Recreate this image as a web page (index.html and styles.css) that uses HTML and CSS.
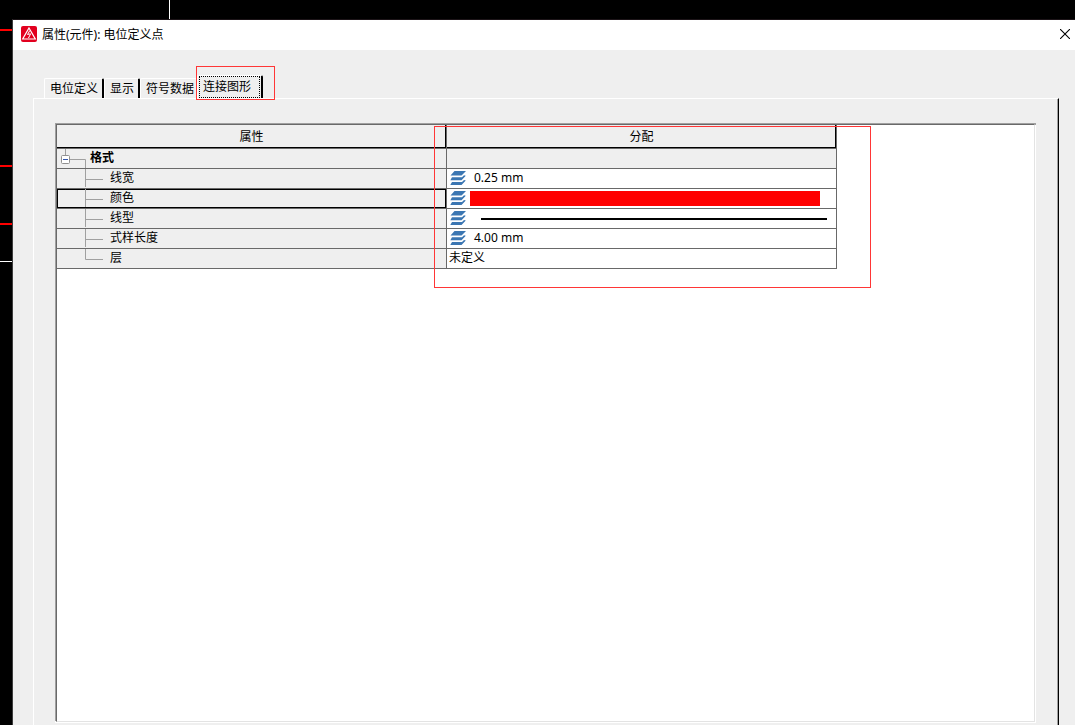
FILE: index.html
```html
<!DOCTYPE html>
<html lang="zh-CN">
<head>
<meta charset="utf-8">
<title>属性(元件): 电位定义点</title>
<link rel="stylesheet" href="styles.css">
</head>
<body>
<svg class="drawing" aria-hidden="true">
  <path d="M0 30H13M0 166H13M0 224H13" stroke="#f00" stroke-width="2"/>
  <path d="M169.500 0V19M0 261.500H13" stroke="#fff"/>
</svg>
<svg class="symbols" aria-hidden="true">
  <symbol id="layers" viewBox="0 0 16 14">
    <path d="M4.500 0H16L11.500 4.500H.5ZM2 6.300H12L14 4.300L15.800 4.800L11.500 9.200H.3ZM2 11H12L14 9L15.800 9.500L11.500 14H.3Z" fill="#3b76b2"/>
  </symbol>
  <symbol id="branch" viewBox="0 0 46 19">
    <path d="M28.500 0V18M28 10.500H46" stroke="#a0a0a0" fill="none"/>
  </symbol>
  <symbol id="branch-end" viewBox="0 0 46 19">
    <path d="M28.500 0V10.500H46" stroke="#a0a0a0" fill="none"/>
  </symbol>
</svg>
<main class="dialog">
  <header class="titlebar">
    <svg class="logo" viewBox="0 0 16 16" aria-hidden="true">
      <rect width="16" height="16" rx="2" fill="#e2001f"/>
      <path d="M8 2L14.300 13H1.700Z" fill="none" stroke="#fff" stroke-width="1.200"/>
      <path d="M8.800 4.500L6.500 8.500L9.600 7.800L7.500 12" fill="none" stroke="#fff" stroke-width="1"/>
    </svg>
    <h1 class="title">属性(元件): 电位定义点</h1>
    <button class="close" type="button" aria-label="关闭">
      <svg viewBox="0 0 10 10" width="10" height="10"><path d="M0 0L10 10M10 0L0 10" stroke="#000" stroke-width="1.100"/></svg>
    </button>
  </header>
  <div class="content">
    <div class="tabs" role="tablist">
      <button class="tab" type="button" role="tab">电位定义</button>
      <button class="tab" type="button" role="tab">显示</button>
      <button class="tab tab-before" type="button" role="tab">符号数据</button>
      <div class="tab-wrap">
        <button class="tab tab-active" type="button" role="tab" aria-selected="true"><span class="focus">连接图形</span></button>
        <span class="mark mark-tab"></span>
      </div>
    </div>
    <section class="panel">
      <div class="list">
        <table class="props">
          <thead>
            <tr><th scope="col">属性</th><th scope="col">分配</th></tr>
          </thead>
          <tbody>
            <tr class="group">
              <td><div class="cell"><svg class="root" width="29" height="19" aria-hidden="true"><path d="M8.500 0V6M13 10.500H28.500V19" stroke="#a0a0a0" fill="none"/><rect x="4.500" y="6.500" width="8" height="8" rx="1" fill="#fff" stroke="#919191"/><path d="M6 10.500H11" stroke="#3355aa"/></svg><b>格式</b></div></td>
              <td></td>
            </tr>
            <tr>
              <td><div class="cell"><svg class="twig"><use href="#branch"/></svg>线宽</div></td>
              <td><div class="cell"><svg class="layers"><use href="#layers"/></svg><span class="value">0.25 mm</span></div></td>
            </tr>
            <tr>
              <td class="selected"><div class="cell"><svg class="twig"><use href="#branch"/></svg>颜色</div></td>
              <td><div class="cell"><svg class="layers"><use href="#layers"/></svg><span class="swatch"></span></div></td>
            </tr>
            <tr>
              <td><div class="cell"><svg class="twig"><use href="#branch"/></svg>线型</div></td>
              <td><div class="cell"><svg class="layers"><use href="#layers"/></svg><span class="stroke"></span></div></td>
            </tr>
            <tr>
              <td><div class="cell"><svg class="twig"><use href="#branch"/></svg>式样长度</div></td>
              <td><div class="cell"><svg class="layers"><use href="#layers"/></svg><span class="value">4.00 mm</span></div></td>
            </tr>
            <tr>
              <td><div class="cell"><svg class="twig"><use href="#branch-end"/></svg>层</div></td>
              <td><div class="cell plain">未定义</div></td>
            </tr>
          </tbody>
        </table>
        <span class="mark mark-table"></span>
      </div>
    </section>
  </div>
</main>
</body>
</html>
```
FILE: styles.css
```css
* { box-sizing: border-box; }

body {
  margin: 0;
  min-height: 100vh;
  display: flex;
  background: #000;
  color: #000;
  font: 12px/18px "Noto Sans", "Noto Sans CJK SC", sans-serif;
}

.drawing {
  position: absolute;
  inset: 0;
  width: 100%;
  height: 100%;
}

.symbols {
  position: absolute;
  width: 0;
  height: 0;
}

.dialog {
  position: relative;
  flex: 1;
  display: flex;
  flex-direction: column;
  margin: 19px 0 0 12px;
  border-top: 1px solid #1c1418;
  border-left: 1px solid #3c3c3c;
  background: #efefef;
}

.titlebar {
  display: flex;
  align-items: center;
  height: 30px;
  padding: 0 5px 0 8px;
  background: #fff;
}

.logo {
  width: 16px;
  height: 16px;
  margin: 0 5px 2px 0;
}

.title {
  flex: 1;
  margin: 0;
  font-size: 12px;
  font-weight: 400;
}

button {
  padding: 0;
  border: 0;
  background: none;
  color: inherit;
  font: inherit;
}

.close {
  display: flex;
  height: 12px;
}

.content {
  flex: 1;
  display: flex;
  flex-direction: column;
  padding: 25px 16px 0 20px;
}

.tabs {
  display: flex;
  align-items: flex-end;
  padding-left: 11px;
}

.tab {
  height: 20px;
  padding: 0 4px 0 5px;
  border: 1px solid #fff;
  border-right: 2px solid #000;
  border-bottom: 0;
  border-radius: 2px 2px 0 0;
  white-space: nowrap;
}

.tab-before {
  padding-right: 3px;
  border-right: 0;
}

.tab-wrap {
  position: relative;
  display: flex;
}

.tab-active {
  height: 23px;
  padding: 0 1px;
}

.focus {
  display: block;
  height: 22px;
  padding: 0 8px 0 3px;
  border: 1px dotted #000;
  line-height: 20px;
}

.mark {
  position: absolute;
  border: 1px solid #ff3636;
  pointer-events: none;
}

.mark-tab {
  top: -9px;
  left: -1px;
  width: 79px;
  height: 34px;
}

.mark-table {
  top: 1px;
  left: 377px;
  width: 437px;
  height: 162px;
}

.panel {
  flex: 1;
  display: flex;
  padding: 24px 22px 2px 21px;
  border: solid #fff;
  border-width: 1px 0 0 1px;
  border-right: 1px solid #000;
  box-shadow: inset -1px 0 #a0a0a0;
}

.list {
  position: relative;
  flex: 1;
  margin: 1px;
  border: 1px solid;
  border-color: #696969 #e3e3e3 #e3e3e3 #696969;
  background: #fff;
  box-shadow: -1px -1px #a0a0a0, 1px 1px #fff, 1px -1px #a0a0a0, -1px 1px #fff;
}

.props {
  width: 780px;
  max-width: 100%;
  table-layout: fixed;
  border-collapse: separate;
  border-spacing: 0;
}

th, td {
  height: 20px;
  padding: 0;
  border: solid #696969;
  border-width: 0 1px 1px 0;
}

th {
  height: 24px;
  background: #efefef;
  font-weight: 400;
  box-shadow: inset -1px -1px #000;
}

td:first-child, .group td { background: #efefef; }

.selected { box-shadow: inset 0 0 0 1px #000; }

.cell {
  display: flex;
  align-items: center;
  height: 19px;
  padding-bottom: 1px;
  line-height: 16px;
}

.root { margin: 0 4px -1px 0; }

.twig {
  width: 46px;
  height: 19px;
  margin: 0 7px -1px 0;
}

.layers {
  width: 16px;
  height: 14px;
  margin-left: 3px;
}

.value { margin-left: 8px; }

.plain { padding-left: 2px; }

.swatch {
  flex: 1;
  height: 15px;
  margin: 1px 16px 0 4px;
  background: #f00;
}

.stroke {
  flex: 1;
  height: 2px;
  margin: 2px 9px 0 15px;
  background: #000;
}
```
